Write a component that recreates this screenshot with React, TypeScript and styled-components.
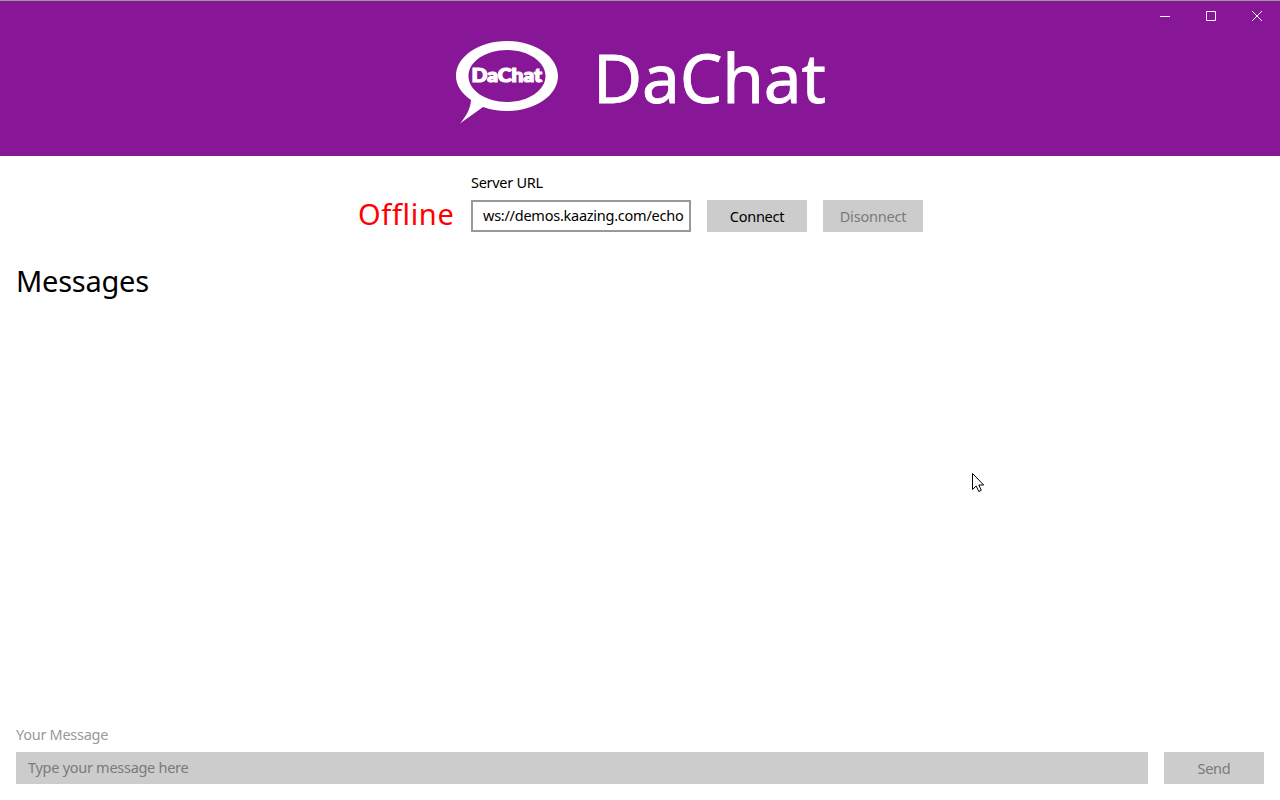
import React from "react";
import styled, { createGlobalStyle } from "styled-components";

const GlobalStyle = createGlobalStyle`
  * { box-sizing: border-box; }
  body { margin: 0; background: #fff; overflow: hidden; }
`;

const Window = styled.div`
  position: relative;
  width: 1280px;
  height: 800px;
  display: flex;
  flex-direction: column;
  background: #fff;
  color: #000;
  font-family: "Noto Sans", "Open Sans", sans-serif;
  font-size: 14.5px;
`;

const Header = styled.header`
  height: 156px;
  flex: none;
  display: flex;
  align-items: flex-start;
  padding: 39px 0 0 454px;
  border-top: 1px solid #999;
  background: #881798;
  color: #fff;
`;

const Title = styled.h1`
  margin: -3px 0 0 33px;
  font-size: 67.5px;
  line-height: 80px;
  font-weight: 400;
  letter-spacing: -0.2px;
  -webkit-text-stroke: 0.8px #fff;
  white-space: nowrap;
`;

const WindowControls = styled.div`
  position: absolute;
  top: 0;
  right: 0;
  display: flex;
`;

const ControlButton = styled.button`
  width: 46px;
  height: 32px;
  padding: 0;
  border: 0;
  background: transparent;
  color: #fff;
  display: grid;
  place-items: center;
`;

const ConnectionBar = styled.section`
  display: flex;
  align-items: flex-end;
  height: 76px;
  padding-left: 358px;
`;

const Status = styled.div`
  width: 113px;
  color: #f00;
  font-size: 29px;
  line-height: 36px;
  letter-spacing: 0.65px;
  white-space: nowrap;
`;

const Field = styled.div<{ $width: number }>`
  width: ${(p) => p.$width}px;
  margin-right: 16px;
  flex: none;
`;

const Label = styled.label<{ $muted?: boolean; $spacing: number }>`
  display: block;
  height: 28px;
  line-height: 20px;
  color: ${(p) => (p.$muted ? "#999" : "#000")};
  letter-spacing: ${(p) => p.$spacing}px;
  white-space: nowrap;
`;

const TextBox = styled.div<{ $disabled?: boolean; $spacing: number }>`
  height: 32px;
  padding-left: 10px;
  border: 2px solid ${(p) => (p.$disabled ? "#ccc" : "#999")};
  background: ${(p) => (p.$disabled ? "#ccc" : "#fff")};
  color: ${(p) => (p.$disabled ? "#7a7a7a" : "#000")};
  line-height: 27px;
  letter-spacing: ${(p) => p.$spacing}px;
  white-space: nowrap;
`;

const Button = styled.button<{ $spacing: number }>`
  width: 100px;
  height: 32px;
  flex: none;
  margin-right: 16px;
  padding: 1px 0 0;
  border: 0;
  background: #ccc;
  color: #000;
  font: inherit;
  line-height: 31px;
  letter-spacing: ${(p) => p.$spacing}px;
  &:disabled { color: #7a7a7a; }
`;

const Messages = styled.main`
  flex: 1;
  padding: 29px 16px 0;
`;

const Heading = styled.h2`
  margin: 0;
  font-size: 29px;
  line-height: 40px;
  font-weight: 400;
  letter-spacing: -0.25px;
`;

const Composer = styled.footer`
  display: flex;
  align-items: flex-end;
  padding: 0 0 16px 16px;
`;

const Pointer = styled.svg`
  position: absolute;
  left: 971px;
  top: 472px;
`;

function Logo() {
  return (
    <svg width="106" height="86" viewBox="454 40 106 86">
      <path
        fill="#fff"
        fillRule="evenodd"
        d="M507 41c28.2 0 51 15.6 51 35s-22.8 35-51 35c-8.700 0-16.800-1.400-24-4L460 123.500c6.400-7.500 10.500-15 11-23.500C461.600 93.600 456 85.300 456 76c0-19.400 22.800-35 51-35zM507 50c-21.300 0-38.500 11.600-38.500 26s17.200 26 38.500 26 38.500-11.600 38.500-26S528.300 50 507 50z"
      />
      <text
        x="471.5"
        y="81.8"
        fill="#fff"
        stroke="#fff"
        strokeWidth="1.2"
        fontFamily="Lato, sans-serif"
        fontWeight="900"
        fontSize="18"
        textLength="70.500"
        lengthAdjust="spacingAndGlyphs"
      >
        DaChat
      </text>
    </svg>
  );
}

function ControlIcon({ d }: { d: string }) {
  return (
    <svg width="12" height="12" viewBox="0 0 12 12" fill="none" stroke="currentColor">
      <path d={d} />
    </svg>
  );
}

export default function App() {
  return (
    <>
      <GlobalStyle />
      <Window>
        <Header>
          <Logo />
          <Title>DaChat</Title>
          <WindowControls>
            <ControlButton aria-label="Minimize"><ControlIcon d="M1 6.500H11" /></ControlButton>
            <ControlButton aria-label="Maximize"><ControlIcon d="M1.500 1.500H10.500V10.500H1.500Z" /></ControlButton>
            <ControlButton aria-label="Close"><ControlIcon d="M1 1L11 11M11 1L1 11" /></ControlButton>
          </WindowControls>
        </Header>
        <ConnectionBar>
          <Status>Offline</Status>
          <Field $width={220}>
            <Label $spacing={-0.28}>Server URL</Label>
            <TextBox $spacing={-0.25}>ws://demos.kaazing.com/echo</TextBox>
          </Field>
          <Button $spacing={-0.25}>Connect</Button>
          <Button $spacing={-0.2} disabled>Disonnect</Button>
        </ConnectionBar>
        <Messages>
          <Heading>Messages</Heading>
        </Messages>
        <Composer>
          <Field $width={1132}>
            <Label $muted $spacing={-0.28}>Your Message</Label>
            <TextBox $disabled $spacing={-0.28}>Type your message here</TextBox>
          </Field>
          <Button $spacing={-0.25} disabled>Send</Button>
        </Composer>
        <Pointer width="14" height="21" viewBox="0 0 14 21">
          <path
            d="M1.500 1.500V17.500L5.200 14L7.800 19.500L10.300 18.300L7.800 13H12.700Z"
            fill="#fff"
            stroke="#000"
          />
        </Pointer>
      </Window>
    </>
  );
}
